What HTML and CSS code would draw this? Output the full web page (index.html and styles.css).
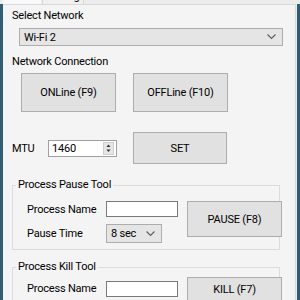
FILE: index.html
```html
<!DOCTYPE html>
<html lang="ja">
<head>
    <meta charset="UTF-8">
    <title>Network Tool</title>
    <link rel="stylesheet" href="styles.css">
</head>
<body>
    <div class="tabstrip">
        <div class="tab active"><span>Main</span></div>
        <div class="tab"><span>Setting</span></div>
    </div>

    <div class="frame">
        <div class="page">
            <div class="label first">Select Network</div>
            <div class="combo wide">
                <span>Wi-Fi 2</span>
                <svg class="chev" width="9" height="6" viewBox="0 0 9 6"><path d="M0.5 0.5 L4.5 4.5 L8.5 0.5" fill="none" stroke="#606060" stroke-width="1.2"/></svg>
            </div>

            <div class="label section">Network Connection</div>
            <div class="btn-row">
                <button class="btn big">ONLine (F9)</button>
                <button class="btn big">OFFLine (F10)</button>
            </div>

            <div class="mtu-row">
                <span class="mtu-label">MTU</span>
                <div class="spin">
                    <span class="spin-value">1460</span>
                    <div class="spin-arrows">
                        <svg width="11" height="6" viewBox="0 0 11 6"><path d="M3 4.5 L5.5 1.5 L8 4.5 Z" fill="#333"/></svg>
                        <svg width="11" height="6" viewBox="0 0 11 6"><path d="M3 1.5 L5.5 4.5 L8 1.5 Z" fill="#333"/></svg>
                    </div>
                </div>
                <button class="btn set">SET</button>
            </div>

            <fieldset class="group pause">
                <legend>Process Pause Tool</legend>
                <div class="tool-grid">
                    <span class="glabel">Process Name</span>
                    <div class="textbox"></div>
                    <button class="btn tool">PAUSE (F8)</button>
                    <span class="glabel">Pause Time</span>
                    <div class="combo short">
                        <span>8 sec</span>
                        <svg class="chev" width="9" height="6" viewBox="0 0 9 6"><path d="M0.5 0.5 L4.5 4.5 L8.5 0.5" fill="none" stroke="#606060" stroke-width="1.2"/></svg>
                    </div>
                </div>
            </fieldset>

            <fieldset class="group kill">
                <legend>Process Kill Tool</legend>
                <div class="tool-grid">
                    <span class="glabel low">Process Name</span>
                    <div class="textbox low"></div>
                    <button class="btn tool">KILL (F7)</button>
                </div>
            </fieldset>
        </div>
    </div>
</body>
</html>
```

FILE: styles.css
```css
body {
    margin: 0;
    width: 300px;
    height: 300px;
    overflow: hidden;
    background: #ececec;
    font-family: Roboto, 'Liberation Sans', 'Noto Sans CJK JP', sans-serif;
    font-size: 11px;
    letter-spacing: -0.2px;
    color: #000;
}

.tabstrip {
    display: flex;
    height: 4px;
    padding-left: 3px;
    overflow: hidden;
}

.tab {
    width: 38px;
    height: 4px;
    overflow: hidden;
    text-align: center;
    line-height: 14px;
}

.tab span {
    display: block;
    margin-top: -10px;
}

.tab.active {
    background: #f9f9f9;
}

.tab:not(.active) {
    margin-left: 1px;
    width: 40px;
    background: #f0f0f0;
    border-left: 1px solid #d9d9d9;
    border-right: 1px solid #d9d9d9;
}

.frame {
    display: flex;
    height: 296px;
    border-left: 3px solid #2f5e75;
    border-right: 3px solid #2f5e75;
}

.page {
    flex: 1;
    background: #f4f4f4;
    border-top: 1px solid #dadada;
    border-right: 1px solid #dadada;
    margin-right: 1px;
    padding-left: 9px;
    white-space: nowrap;
}

.label {
    line-height: 14px;
}

.label.first {
    margin-top: 4px;
}

.label.section {
    margin-top: 9px;
}

.combo {
    display: flex;
    align-items: center;
    justify-content: space-between;
    box-sizing: border-box;
    background: #e5e5e5;
    border: 1px solid #adadad;
    padding: 0 6px 0 4px;
}

.combo.wide {
    width: 264px;
    height: 18px;
    margin: 5px 0 0 7px;
}

.combo.short {
    width: 56px;
    height: 19px;
    padding-left: 4px;
}

.chev {
    display: block;
}

.btn-row {
    display: flex;
    gap: 17px;
    margin: 4px 0 0 9px;
}

.btn {
    box-sizing: border-box;
    background: #e1e1e1;
    border: 1px solid #adadad;
    font-family: inherit;
    font-size: 11px;
    letter-spacing: -0.2px;
    color: #000;
    padding: 0;
}

.btn.big {
    width: 95px;
    height: 39px;
}

.mtu-row {
    display: flex;
    align-items: center;
    height: 32px;
    margin-top: 20px;
}

.mtu-label {
    width: 36px;
}

.spin {
    display: flex;
    align-items: center;
    justify-content: space-between;
    box-sizing: border-box;
    width: 69px;
    height: 17px;
    background: #fff;
    border: 1px solid #a0a0a0;
    padding-left: 3px;
}

.spin-arrows {
    display: flex;
    flex-direction: column;
    width: 11px;
    height: 13px;
    margin-right: 2px;
    background: #e6e6e6;
    border: 1px solid #cfcfcf;
    box-sizing: border-box;
}

.spin-arrows svg {
    display: block;
    width: 9px;
    height: 5.5px;
}

.btn.set {
    width: 94px;
    height: 32px;
    margin-left: 16px;
}

.group {
    box-sizing: border-box;
    width: 268px;
    margin: 14px 0 0 0;
    border: 1px solid #dcdcdc;
    padding: 9px 0 6px 14px;
    min-width: 0;
}

.group legend {
    margin-left: -11px;
    padding: 0 2px;
    line-height: 14px;
}

.group.kill {
    margin-top: 10px;
    padding-top: 3px;
}

.tool-grid {
    display: grid;
    grid-template-columns: 70px 72px 95px;
    column-gap: 9px;
    row-gap: 7px;
    align-items: center;
}

.tool-grid .btn.tool {
    grid-row: span 2;
    align-self: start;
    height: 36px;
}

.kill .tool-grid .btn.tool {
    grid-row: auto;
    height: 24px;
}

.textbox {
    box-sizing: border-box;
    height: 16px;
    background: #fff;
    border: 1px solid #7a7a7a;
}

.kill .tool-grid {
    align-items: start;
}

.low {
    margin-top: 4px;
}

.glabel.low {
    margin-top: 5px;
}
```
